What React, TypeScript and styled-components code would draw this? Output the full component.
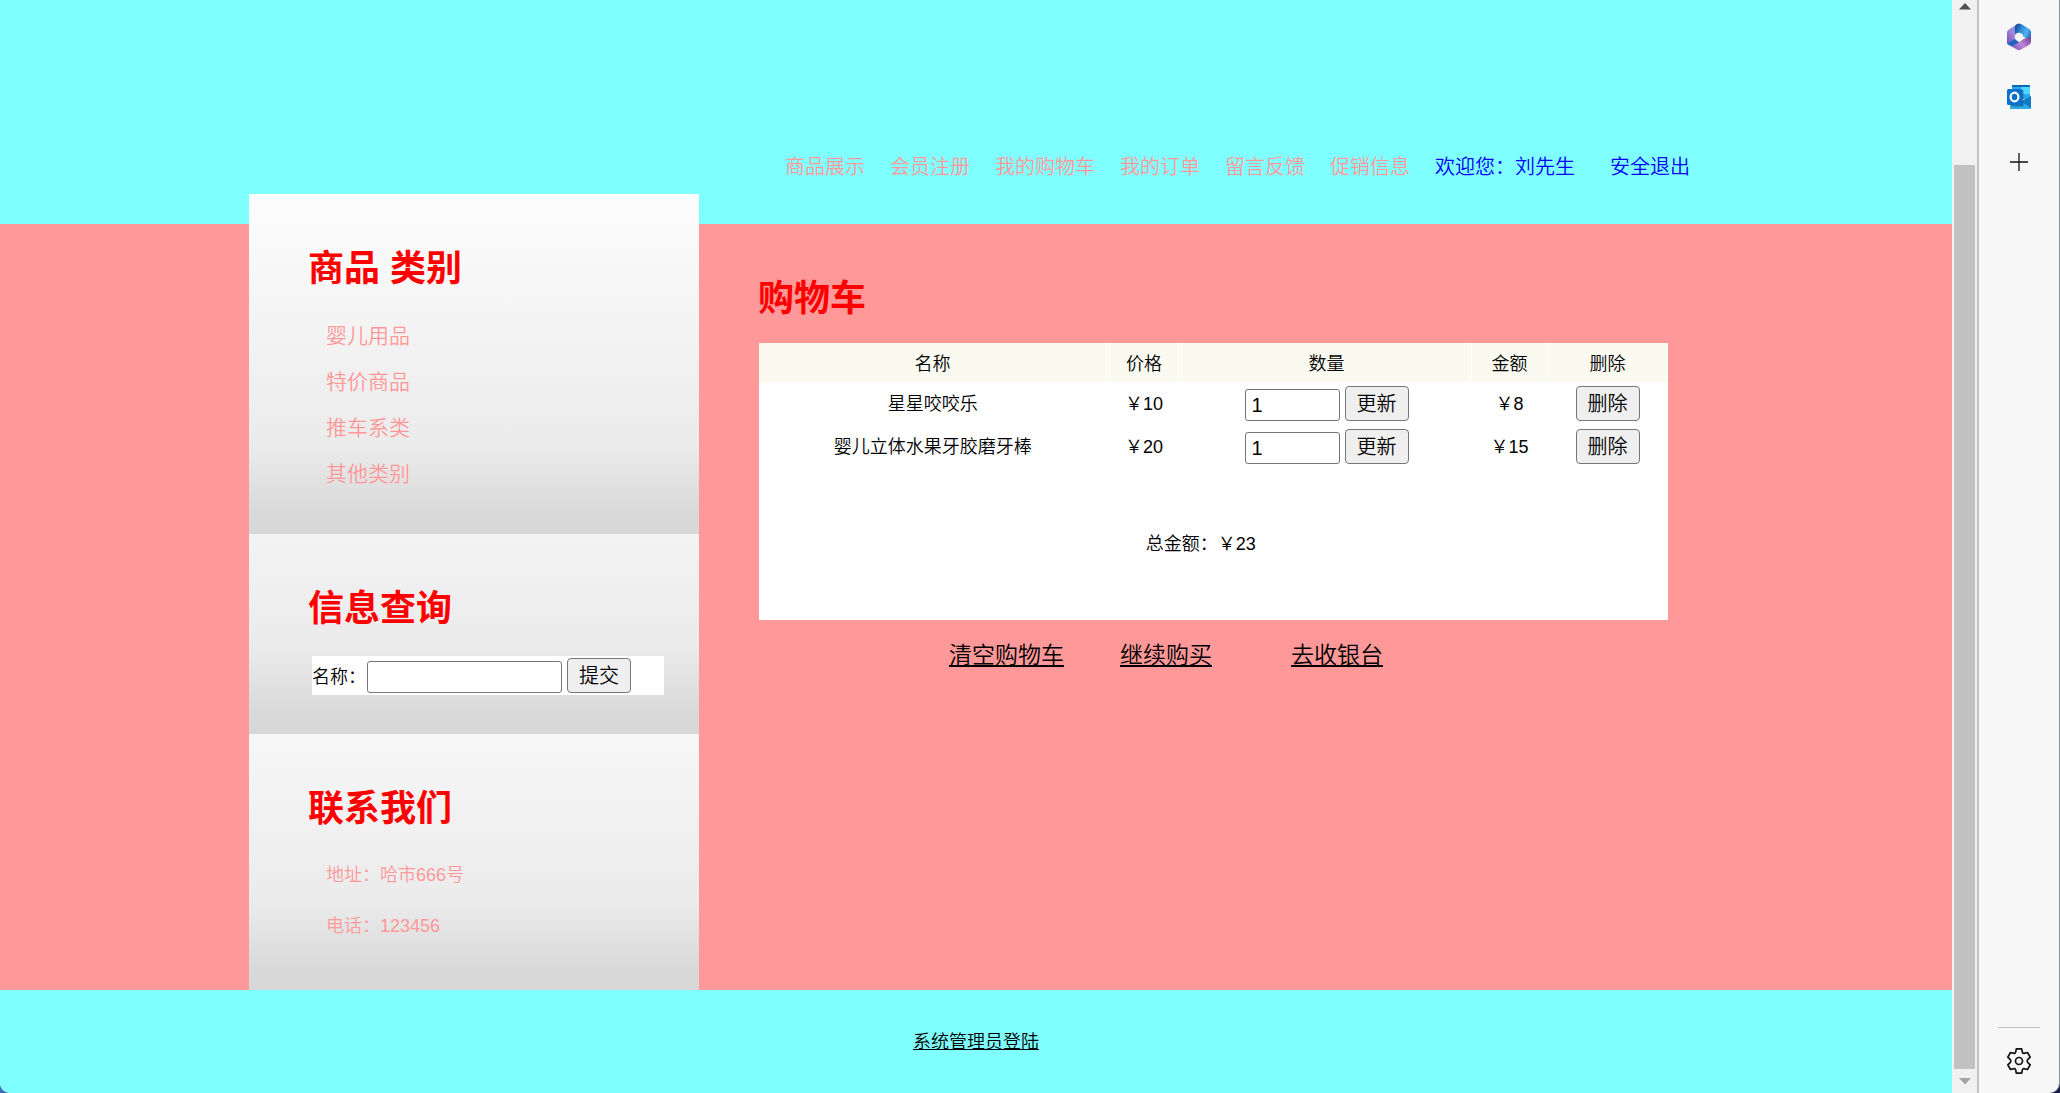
import React from "react";
import styled, { createGlobalStyle } from "styled-components";

const GlobalStyle = createGlobalStyle`
  * { box-sizing: border-box; }
  html, body { margin: 0; }
  body {
    background: linear-gradient(90deg, #3a6db5, #171c4a);
    font-family: "Liberation Sans", "Noto Sans CJK SC", sans-serif;
    font-size: 18px;
    font-weight: 350;
    color: #000;
  }
  button, input { font: inherit; font-size: 20px; color: inherit; }
  a { color: inherit; }
`;

const Window = styled.div`
  display: flex;
  min-height: 100vh;
  overflow: hidden;
  border-right: 1px solid #8a8f9c;
  border-radius: 0 0 10px 10px;
  background: #f7f7f7;
`;

const Page = styled.div`
  flex: 1;
  min-width: 0;
  display: flex;
  flex-direction: column;
  background: #80ffff;
`;

const Container = styled.div`
  width: 100%;
  max-width: 1454px;
  margin: 0 auto;
`;

const Header = styled.header`
  padding: 147px 0 37px;
`;

const Nav = styled(Container).attrs({ as: "nav" })`
  display: flex;
  justify-content: flex-end;
  gap: 25px;
  padding-right: 13px;
  font-size: 20px;
  line-height: 40px;
`;

const NavLink = styled.a`
  color: #ff9999;
  text-decoration: none;
  white-space: nowrap;
`;

const Account = styled.div`
  display: flex;
  gap: 35px;
  color: #0000ff;
  white-space: nowrap;
`;

const AccountLink = styled.a`
  text-decoration: none;
`;

const Body = styled.div`
  background: #ff9999;
`;

const Columns = styled(Container)`
  display: flex;
`;

const Aside = styled.aside`
  flex: 0 0 450px;
  margin-top: -30px;
`;

const Panel = styled.section`
  padding: 51px 35px 37px 59px;
  background: linear-gradient(to top, #d7d7d7 0, #d9d9d9 20px, #ebebeb 88px, #fcfcfc 330px);
`;

const Title = styled.h2`
  margin: 0;
  font-size: 36px;
  line-height: 48px;
  font-weight: 700;
  color: #ff0000;
`;

const LinkList = styled.ul`
  list-style: none;
  margin: 20px 0 0;
  padding: 0 0 0 18px;
  font-size: 21px;
  line-height: 46px;
  color: #ff9999;
`;

const ListLink = styled.a`
  text-decoration: none;
`;

const ContactList = styled.div`
  margin-top: 17px;
  padding: 0 0 1px 18px;
  line-height: 51px;
  color: #ff9999;
`;

const ContactLine = styled.p`
  margin: 0;
`;

const SearchForm = styled.form`
  display: flex;
  align-items: flex-end;
  gap: 5px;
  height: 39px;
  margin: 23px 0 2px 4px;
  padding-bottom: 2px;
  background: #fff;
`;

const SearchLabel = styled.label`
  width: 50px;
  line-height: 32px;
  white-space: nowrap;
`;

const TextField = styled.input<{ $width: number }>`
  width: ${(p) => p.$width}px;
  height: 32px;
  padding: 0 6px;
  border: 1px solid #767676;
  border-radius: 3px;
  background: #fff;
`;

const Button = styled.button`
  height: 35px;
  padding: 2px 11px 0;
  border: 1px solid #767676;
  border-radius: 4px;
  background: #efefef;
  line-height: 31px;
`;

const Main = styled.main`
  flex: 1;
  min-width: 0;
  padding: 51px 35px 0 59px;
`;

const CartTable = styled.table`
  width: calc(100% - 1px);
  margin: 20px 0 0 1px;
  table-layout: fixed;
  border-collapse: collapse;
  background: #fff;
  text-align: center;
`;

const Col = styled.col<{ $width?: number }>`
  width: ${(p) => (p.$width ? `${p.$width}px` : "auto")};
`;

const HeadCell = styled.th`
  height: 39px;
  padding: 0;
  border-right: 1px solid #fff;
  border-bottom: 1px solid #fff;
  background: #fafaf0;
  font-weight: 350;
`;

const Cell = styled.td<{ $control?: boolean }>`
  height: 43px;
  padding: 0 0 ${(p) => (p.$control ? 0 : 4)}px;
`;

const Quantity = styled.div`
  display: flex;
  align-items: flex-end;
  justify-content: center;
  gap: 5px;
`;

const TotalCell = styled.td`
  height: 152px;
  padding: 0 25px 4px 0;
`;

const Actions = styled.div`
  display: grid;
  grid-template-columns: repeat(3, 171px);
  padding: 17px 0 0 191px;
  font-size: 23px;
  line-height: 36px;
`;

const Footer = styled.footer`
  flex: 1;
  display: flex;
  align-items: center;
  justify-content: center;
  min-height: 103px;
  padding-bottom: 4px;
`;

const Scrollbar = styled.div`
  flex: 0 0 27px;
  display: flex;
  flex-direction: column;
  align-items: center;
  padding: 3px 2px 8px;
  border-right: 2px solid #c1c1c1;
  background: #f1f1f1;
`;

const Track = styled.div`
  flex: 1;
  align-self: stretch;
  display: flex;
  padding: 155px 0 9px;
`;

const Thumb = styled.div`
  flex: 1;
  background: #c1c1c1;
`;

const Dock = styled.div`
  flex: 0 0 80px;
  display: flex;
  flex-direction: column;
  align-items: center;
  padding: 23px 0 18px;
`;

const DockButton = styled.button<{ $top?: number }>`
  display: flex;
  margin-top: ${(p) => p.$top ?? 0}px;
  padding: 0;
  border: 0;
  background: none;
`;

const DockBottom = styled.div`
  display: flex;
  justify-content: center;
  width: 42px;
  margin-top: auto;
  padding-top: 19px;
  border-top: 1px solid #c1c1c1;
`;

const navItems = ["商品展示", "会员注册", "我的购物车", "我的订单", "留言反馈", "促销信息"];
const categories = ["婴儿用品", "特价商品", "推车系类", "其他类别"];
const cartItems = [
  { name: "星星咬咬乐", price: 10, amount: 8 },
  { name: "婴儿立体水果牙胶磨牙棒", price: 20, amount: 15 },
];
const actions = ["清空购物车", "继续购买", "去收银台"];

const Microsoft365Icon = () => (
  <svg width="26" height="28" viewBox="0 0 26 28">
    <defs>
      <linearGradient id="m365-left" x1="0.8" y1="0" x2="0.1" y2="1">
        <stop offset="0" stopColor="#6a8fdc" />
        <stop offset="0.4" stopColor="#a58ae0" />
        <stop offset="1" stopColor="#7a4fb8" />
      </linearGradient>
      <linearGradient id="m365-top" x1="0" y1="0.3" x2="1" y2="0.8">
        <stop offset="0" stopColor="#1c4f9c" />
        <stop offset="0.3" stopColor="#2f86d2" />
        <stop offset="0.65" stopColor="#4db4ee" />
        <stop offset="1" stopColor="#2f58c4" />
      </linearGradient>
      <linearGradient id="m365-right" x1="0" y1="0.8" x2="1" y2="0.2">
        <stop offset="0" stopColor="#6e4fae" />
        <stop offset="0.5" stopColor="#bd86dc" />
        <stop offset="1" stopColor="#7b4a9e" />
      </linearGradient>
    </defs>
    <path d="M12 1 3 6.300Q1 7.500 1 9.700v9.800q0 2.500 2 2L10 18V2Z" fill="url(#m365-left)" />
    <path d="M9 11V3.500Q9 2 11 1q2-1 4 .1l8 4.600q2 1.200 2 3.500V18l-8-4.500-4-3.500Z" fill="url(#m365-top)" />
    <path d="M25 13.500V18.600q0 2.200-2 3.400l-8 4.600q-2 1.100-4 0L3.500 22.300l9.500-3.300 4.500-3Z" fill="url(#m365-right)" />
    <path d="M1 18.500q1 1.500 3 .5l6-3.500 3 3.800-6 3.400q-2 .8-4-.7-2-1.200-2-3.500Z" fill="#2363c0" />
    <circle cx="13" cy="14" r="4.300" fill="#f7f7f7" />
  </svg>
);

const OutlookIcon = () => (
  <svg width="26" height="26" viewBox="0 0 26 26">
    <path d="M7 1h16a1 1 0 0 1 1 1v13H6V2a1 1 0 0 1 1-1Z" fill="#28a8ea" />
    <path d="M6 3V2a1 1 0 0 1 1-1h16a1 1 0 0 1 1 1v1Z" fill="#0c67b5" />
    <path d="M15 3h9v7h-9Z" fill="#50d9ff" />
    <path d="M6 3h9v7H6Z" fill="#28a8ea" />
    <path d="M4 15 15 17.500 25 12v12a1 1 0 0 1-1 1H5a1 1 0 0 1-1-1Z" fill="#35b8f1" />
    <path d="M25 12v12.500L15 17.500Z" fill="#1378c8" />
    <path d="M4 24.500 15.500 18 25 24.500q-.5.500-1 .5H5q-.8 0-1-.5Z" fill="#2cabea" />
    <path d="M15 6h1.500a1 1 0 0 1 1 1v14a1.500 1.500 0 0 1-1.500 1.500H5V21Z" fill="#174f7d" opacity=".6" />
    <rect x="1" y="5" width="15.500" height="16" rx="1.500" fill="#0a70cc" />
    <ellipse cx="8.500" cy="13" rx="3.900" ry="4.300" fill="none" stroke="#fff" strokeWidth="2.200" />
  </svg>
);

const PlusIcon = () => (
  <svg width="18" height="18" viewBox="0 0 18 18">
    <path d="M9 0v18M0 9h18" stroke="#111" strokeWidth="1.300" />
  </svg>
);

const GearIcon = () => (
  <svg width="26" height="28" viewBox="0 0 26 28" fill="none" stroke="#111" strokeWidth="1.700" strokeLinejoin="round">
    <path d="M10.300 1.800h5.400l.7 3.500q.3 1.300 1.600 1.100l3.500-.9 2.700 4.700-2.600 2.500q-1 1.300 0 2.600l2.600 2.500-2.700 4.700-3.500-.9q-1.300-.2-1.600 1.100l-.7 3.500h-5.400l-.7-3.500q-.3-1.300-1.600-1.100l-3.500.9-2.700-4.700 2.600-2.500q1-1.300 0-2.600L1.800 10.200l2.700-4.700 3.500.9q1.300.2 1.600-1.100Z" />
    <circle cx="13" cy="14" r="3.500" />
  </svg>
);

const Arrow = ({ down = false }: { down?: boolean }) => (
  <svg width="12" height="7" viewBox="0 0 12 7">
    <path d={down ? "M0 0h12L6 6.500Z" : "M0 6.500h12L6 0Z"} fill={down ? "#a3a3a3" : "#505050"} />
  </svg>
);

export default function App() {
  return (
    <>
      <GlobalStyle />
      <Window>
        <Page>
          <Header>
            <Nav>
              {navItems.map((item) => (
                <NavLink href="#" key={item}>{item}</NavLink>
              ))}
              <Account>
                <span>欢迎您：刘先生</span>
                <AccountLink href="#">安全退出</AccountLink>
              </Account>
            </Nav>
          </Header>
          <Body>
            <Columns>
              <Aside>
                <Panel>
                  <Title>商品 类别</Title>
                  <LinkList>
                    {categories.map((item) => (
                      <li key={item}><ListLink href="#">{item}</ListLink></li>
                    ))}
                  </LinkList>
                </Panel>
                <Panel>
                  <Title>信息查询</Title>
                  <SearchForm onSubmit={(e) => e.preventDefault()}>
                    <SearchLabel htmlFor="keyword">名称：</SearchLabel>
                    <TextField id="keyword" type="text" $width={195} />
                    <Button type="submit">提交</Button>
                  </SearchForm>
                </Panel>
                <Panel>
                  <Title>联系我们</Title>
                  <ContactList>
                    <ContactLine>地址：哈市666号</ContactLine>
                    <ContactLine>电话：123456</ContactLine>
                  </ContactList>
                </Panel>
              </Aside>
              <Main>
                <Title>购物车</Title>
                <CartTable>
                  <colgroup>
                    <Col />
                    <Col $width={75} />
                    <Col $width={290} />
                    <Col $width={76} />
                    <Col $width={120} />
                  </colgroup>
                  <thead>
                    <tr>
                      <HeadCell>名称</HeadCell>
                      <HeadCell>价格</HeadCell>
                      <HeadCell>数量</HeadCell>
                      <HeadCell>金额</HeadCell>
                      <HeadCell>删除</HeadCell>
                    </tr>
                  </thead>
                  <tbody>
                    {cartItems.map((item) => (
                      <tr key={item.name}>
                        <Cell>{item.name}</Cell>
                        <Cell>￥{item.price}</Cell>
                        <Cell $control>
                          <Quantity>
                            <TextField type="text" defaultValue="1" aria-label={`${item.name} 数量`} $width={95} />
                            <Button type="button">更新</Button>
                          </Quantity>
                        </Cell>
                        <Cell>￥{item.amount}</Cell>
                        <Cell $control><Button type="button">删除</Button></Cell>
                      </tr>
                    ))}
                  </tbody>
                  <tfoot>
                    <tr>
                      <TotalCell colSpan={5}>总金额：￥23</TotalCell>
                    </tr>
                  </tfoot>
                </CartTable>
                <Actions>
                  {actions.map((item) => (
                    <div key={item}><a href="#">{item}</a></div>
                  ))}
                </Actions>
              </Main>
            </Columns>
          </Body>
          <Footer>
            <a href="#">系统管理员登陆</a>
          </Footer>
        </Page>
        <Scrollbar>
          <Arrow />
          <Track><Thumb /></Track>
          <Arrow down />
        </Scrollbar>
        <Dock>
          <DockButton aria-label="Microsoft 365"><Microsoft365Icon /></DockButton>
          <DockButton aria-label="Outlook" $top={33}><OutlookIcon /></DockButton>
          <DockButton aria-label="添加" $top={43}><PlusIcon /></DockButton>
          <DockBottom>
            <DockButton aria-label="设置"><GearIcon /></DockButton>
          </DockBottom>
        </Dock>
      </Window>
    </>
  );
}
